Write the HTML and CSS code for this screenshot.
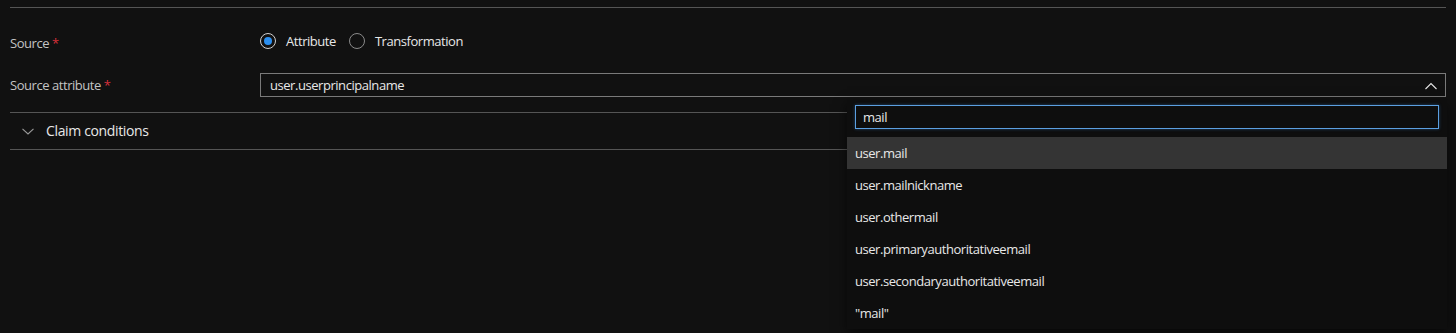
FILE: index.html
```html
<!DOCTYPE html>
<html lang="en">
<head>
    <meta charset="UTF-8">
    <title>Claim source</title>
    <link rel="stylesheet" href="styles.css">
</head>
<body>
<div class="claim-form">
    <div class="form-row">
        <div class="field-label">Source <span class="required">*</span></div>
        <div class="radio-group">
            <label class="radio checked"><span class="radio-circle"></span>Attribute</label>
            <label class="radio"><span class="radio-circle"></span>Transformation</label>
        </div>
    </div>
    <div class="form-row row-attr">
        <div class="field-label">Source attribute <span class="required">*</span></div>
        <div class="combo">
            <div class="combo-box">
                <span class="combo-value">user.userprincipalname</span>
                <svg class="combo-chevron" width="12" height="8" viewBox="0 0 12 8"><path d="M0.5 7 L6 1.5 L11.5 7" fill="none" stroke="#e6e6e6" stroke-width="1.1"/></svg>
            </div>
            <div class="combo-panel">
                <div class="search-box">mail</div>
                <ul class="option-list">
                    <li class="option selected">user.mail</li>
                    <li class="option">user.mailnickname</li>
                    <li class="option">user.othermail</li>
                    <li class="option">user.primaryauthoritativeemail</li>
                    <li class="option">user.secondaryauthoritativeemail</li>
                    <li class="option">"mail"</li>
                </ul>
            </div>
        </div>
    </div>
    <div class="section-toggle">
        <svg class="toggle-chevron" width="12" height="7" viewBox="0 0 12 7"><path d="M0.5 0.8 L6 6 L11.5 0.8" fill="none" stroke="#9a9a9a" stroke-width="1.1"/></svg>
        <span class="toggle-text">Claim conditions</span>
    </div>
</div>
</body>
</html>
```

FILE: styles.css
```css
:root {
    --bg: #111111;
    --text: #e8e8e8;
    --label: #c4c4c4;
    --line: #555555;
    --required: #d8303a;
    --accent: #2b8ff0;
    --font: "Open Sans", "Noto Sans", sans-serif;
}
body {
    margin: 0;
    background: var(--bg);
    font-family: var(--font);
    font-size: 13px;
    letter-spacing: -0.45px;
    color: var(--text);
    height: 333px;
    overflow: hidden;
}
.claim-form {
    margin: 7px 10px 0;
    border-top: 1px solid var(--line);
}
.form-row {
    display: flex;
    align-items: center;
    margin-top: 21px;
    height: 24px;
}
.row-attr {
    margin-top: 20px;
}
.field-label {
    width: 250px;
    color: var(--label);
    position: relative;
    top: 2px;
}
.row-attr .field-label {
    top: 0;
}
.required {
    color: var(--required);
}
.radio-group {
    display: flex;
    gap: 13px;
}
.radio {
    display: flex;
    align-items: center;
    gap: 10px;
}
.radio-circle {
    width: 14px;
    height: 14px;
    border: 1px solid #8a8a8a;
    border-radius: 50%;
    box-sizing: content-box;
    display: flex;
    align-items: center;
    justify-content: center;
}
.radio.checked .radio-circle {
    border-color: #d0d0d0;
}
.radio.checked .radio-circle::after {
    content: "";
    width: 8px;
    height: 8px;
    border-radius: 50%;
    background: var(--accent);
}
.combo {
    flex: 1;
    position: relative;
}
.combo-box {
    height: 24px;
    box-sizing: border-box;
    border: 1px solid #7a7a7a;
    display: flex;
    align-items: center;
    justify-content: space-between;
    padding: 0 8px 0 9px;
}
.combo-chevron {
    margin-top: 1px;
}
.combo-panel {
    position: absolute;
    top: 27px;
    left: 587px;
    right: -1px;
    background: #0e0e0e;
    padding-top: 5px;
    box-shadow: 0 4px 12px rgba(0, 0, 0, 0.6);
    z-index: 2;
}
.search-box {
    margin: 0 8px;
    height: 24px;
    box-sizing: border-box;
    border: 1px solid #5b9fe0;
    box-shadow: 0 0 3px rgba(60, 130, 210, 0.45);
    padding: 0 7px;
    display: flex;
    align-items: center;
}
.option-list {
    list-style: none;
    margin: 8px 0 0;
    padding: 0;
}
.option {
    height: 32px;
    display: flex;
    align-items: center;
    padding-left: 8px;
}
.option.selected {
    background: #343434;
}
.section-toggle {
    margin-top: 15px;
    border-top: 1px solid var(--line);
    border-bottom: 1px solid var(--line);
    height: 36px;
    display: flex;
    align-items: center;
    gap: 12px;
    padding-left: 12px;
    font-size: 14px;
    letter-spacing: -0.35px;
}
.toggle-text {
    margin-top: -2px;
}
```
